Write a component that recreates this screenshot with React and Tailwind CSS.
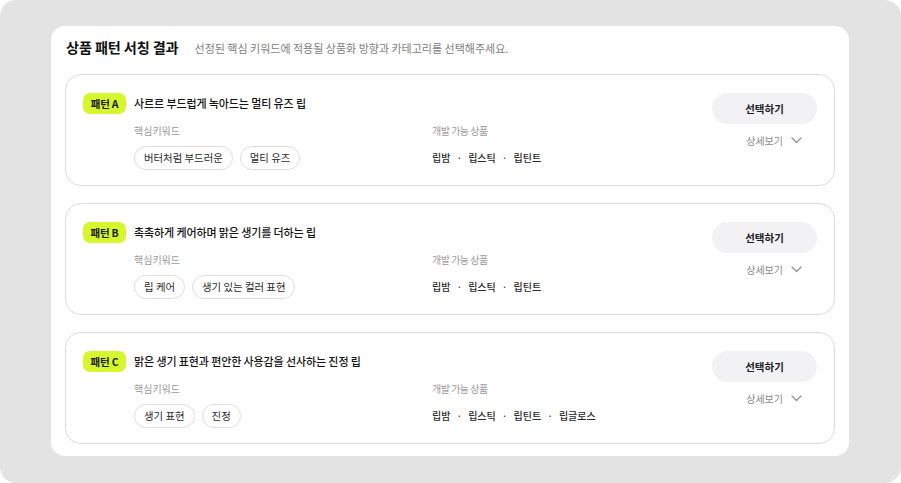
import React from "react";

const patterns = [
  {
    id: "A",
    title: "사르르 부드럽게 녹아드는 멀티 유즈 립",
    keywords: ["버터처럼 부드러운", "멀티 유즈"],
    products: ["립밤", "립스틱", "립틴트"],
  },
  {
    id: "B",
    title: "촉촉하게 케어하며 맑은 생기를 더하는 립",
    keywords: ["립 케어", "생기 있는 컬러 표현"],
    products: ["립밤", "립스틱", "립틴트"],
  },
  {
    id: "C",
    title: "맑은 생기 표현과 편안한 사용감을 선사하는 진정 립",
    keywords: ["생기 표현", "진정"],
    products: ["립밤", "립스틱", "립틴트", "립글로스"],
  },
];

function Chevron() {
  return (
    <svg width="11" height="7" viewBox="0 0 11 7" fill="none">
      <path d="M1 1l4.5 4.5L10 1" stroke="#8f8f8f" strokeWidth="1.2" strokeLinecap="round" strokeLinejoin="round" />
    </svg>
  );
}

function Card({ p }) {
  return (
    <div className="flex rounded-[16px] border border-[#dcdcdc] bg-white pl-[17px] pr-[17px] pt-[18px] pb-[16px] h-[112px]">
      <div className="flex-1 flex flex-col">
        <div className="flex items-center h-[21px]">
          <span className="flex items-center justify-center w-[43px] h-[21px] rounded-[7px] bg-[#d6f72e] text-[10.5px] font-bold text-[#1c1c1c] tracking-[-0.02em]">
            패턴 {p.id}
          </span>
          <span className="ml-[8px] text-[11px] font-medium text-[#141414] tracking-[-0.01em]">{p.title}</span>
        </div>
        <div className="flex ml-[51px] mt-[9px]">
          <div className="w-[298px] flex flex-col">
            <span className="text-[10px] leading-[16px] text-[#9a9a9a]">핵심키워드</span>
            <div className="flex gap-[7px] mt-[7px]">
              {p.keywords.map((k) => (
                <span key={k} className="flex items-center h-[24px] px-[9px] rounded-full border border-[#dedede] text-[10.4px] text-[#2a2a2a]">
                  {k}
                </span>
              ))}
            </div>
          </div>
          <div className="flex flex-col">
            <span className="text-[10px] leading-[16px] text-[#9a9a9a] tracking-[-0.05em]">개발 가능 상품</span>
            <div className="flex items-center h-[24px] mt-[6px] text-[10px] font-medium text-[#2a2a2a]">
              {p.products.map((x, i) => (
                <React.Fragment key={x}>
                  {i > 0 && <span className="mx-[6px] text-[#444]">·</span>}
                  <span>{x}</span>
                </React.Fragment>
              ))}
            </div>
          </div>
        </div>
      </div>
      <div className="flex flex-col items-end w-[105px]">
        <button className="w-[105px] h-[31px] rounded-full bg-[#f2f2f4] text-[10.5px] font-semibold text-[#1c1c1c]">
          선택하기
        </button>
        <div className="flex items-center gap-[8px] mt-[8px] mr-[15px] h-[16px] text-[10px] text-[#8a8a8a]">
          <span>상세보기</span>
          <Chevron />
        </div>
      </div>
    </div>
  );
}

export default function App() {
  return (
    <div
      className="w-[901px] h-[483px] bg-white"
      style={{ fontFamily: '"Noto Sans CJK KR", "Noto Sans", sans-serif' }}
    >
      <div className="w-full h-full rounded-[16px] bg-[#e3e3e3] pl-[51px] pr-[52px] pt-[26px] pb-[27px]">
        <div className="w-full h-full rounded-[14px] bg-white px-[14px] pt-[12px] pb-[14px] flex flex-col">
          <div className="flex items-center h-[20px] ml-[1px]">
            <span className="text-[14.2px] font-bold text-[#111] tracking-[-0.01em]">상품 패턴 서칭 결과</span>
            <span className="ml-[16px] text-[11px] text-[#808080]">
              선정된 핵심 키워드에 적용될 상품화 방향과 카테고리를 선택해주세요.
            </span>
          </div>
          <div className="flex flex-col gap-[17px] mt-[16px]">
            {patterns.map((p) => (
              <Card key={p.id} p={p} />
            ))}
          </div>
        </div>
      </div>
    </div>
  );
}
